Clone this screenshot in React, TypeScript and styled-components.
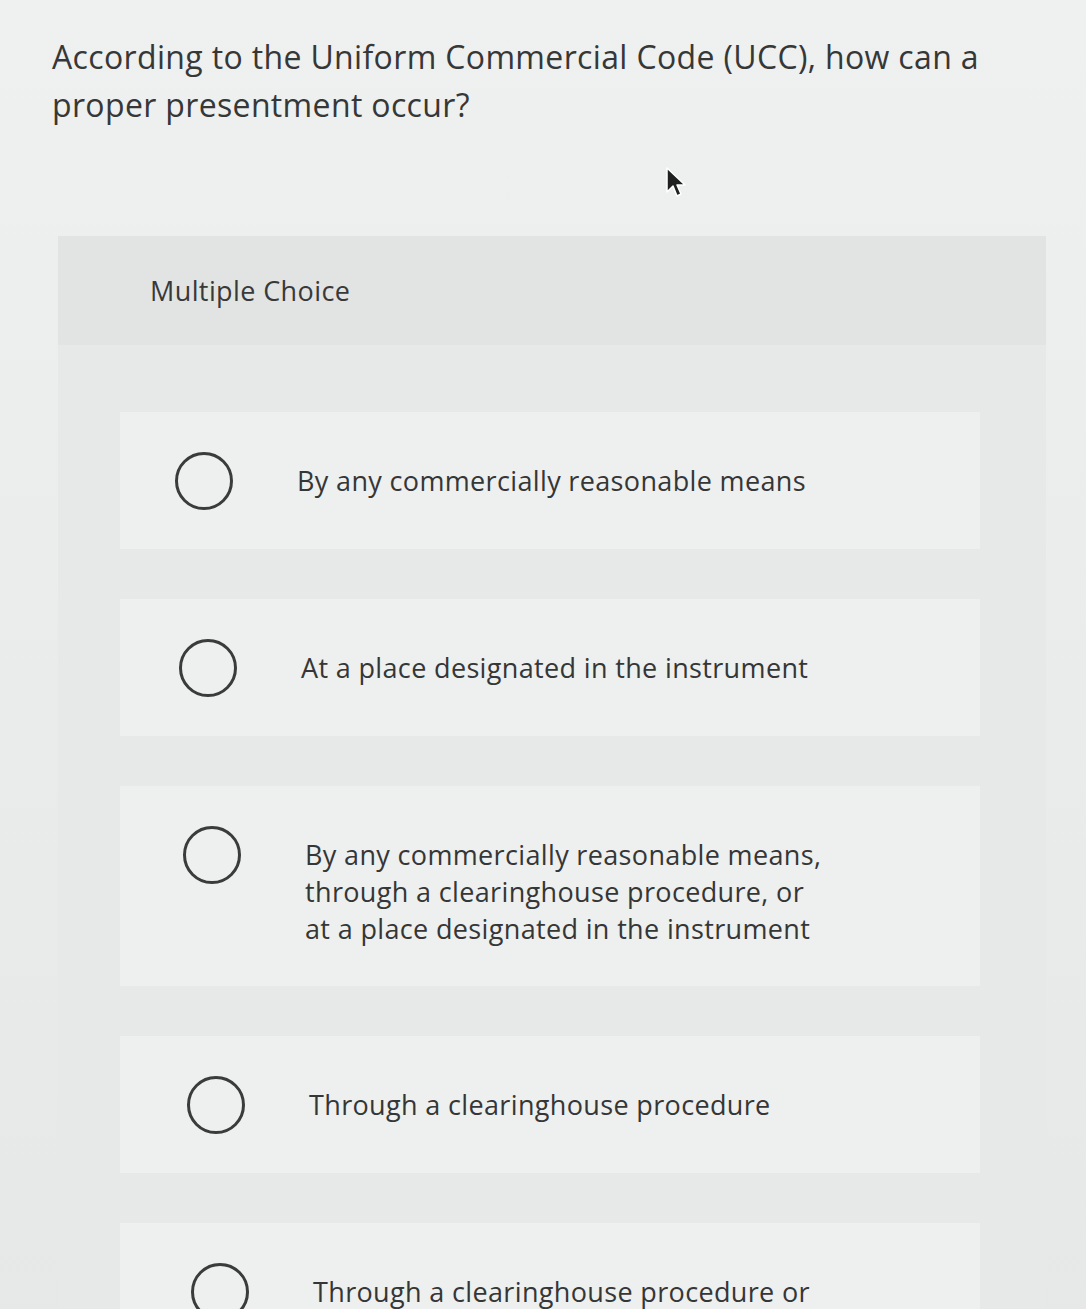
import styled, { createGlobalStyle } from "styled-components";

const GlobalStyle = createGlobalStyle`
  html, body {
    margin: 0;
    padding: 0;
    background: #eceded;
  }
  body {
    font-family: "Open Sans", Lato, "Liberation Sans", sans-serif;
    color: #353636;
  }
`;

const Page = styled.div`
  position: relative;
  min-height: 1309px;
  overflow: hidden;
  background: linear-gradient(180deg, #eff0f0 0%, #ebecec 40%, #e6e7e7 100%);
  padding: 33px 40px 0 52px;
  box-sizing: border-box;
`;

const Question = styled.h1`
  margin: 0;
  width: 970px;
  font-size: 32px;
  letter-spacing: 0.35px;
  line-height: 48px;
  font-weight: 400;
  color: #363737;
`;

const Cursor = styled.svg`
  position: absolute;
  left: 664px;
  top: 166px;
  width: 24px;
  height: 36px;
`;

const Panel = styled.section`
  margin: 107px 0 0 6px;
  width: 988px;
  background: #e7e8e8;
`;

const PanelHeader = styled.div`
  height: 109px;
  display: flex;
  align-items: center;
  padding-left: 92px;
  background: #e2e3e3;
  font-size: 27px;
  letter-spacing: 0.4px;
  color: #383939;
`;

const Options = styled.div`
  display: flex;
  flex-direction: column;
  gap: 50px;
  padding: 67px 66px 0 62px;
`;

const OptionCard = styled.label<{ $shift: number }>`
  display: flex;
  align-items: flex-start;
  gap: 64px;
  padding: 40px 0 39px ${(p) => 55 + p.$shift}px;
  background: #eeefef;
  cursor: pointer;
`;

const Radio = styled.span`
  flex: none;
  width: 52px;
  height: 52px;
  border: 3px solid #3a3b3b;
  border-radius: 50%;
`;

const OptionText = styled.span`
  white-space: pre-line;
  padding-top: 10px;
  font-size: 27px;
  letter-spacing: 0.35px;
  line-height: 37px;
  color: #353636;
`;

const options = [
  "By any commercially reasonable means",
  "At a place designated in the instrument",
  "By any commercially reasonable means,\nthrough a clearinghouse procedure, or\nat a place designated in the instrument",
  "Through a clearinghouse procedure",
  "Through a clearinghouse procedure or",
];

export default function App() {
  return (
    <Page>
      <GlobalStyle />
      <Question>
        According to the Uniform Commercial Code (UCC), how can a proper presentment occur?
      </Question>
      <Cursor viewBox="0 0 24 36">
        <path
          d="M3 2 L3 26 L9 20 L13 30 L17 28 L13 19 L21 19 Z"
          fill="#1f2020"
          stroke="#ffffff"
          strokeWidth="1.5"
          strokeLinejoin="round"
        />
      </Cursor>
      <Panel>
        <PanelHeader>Multiple Choice</PanelHeader>
        <Options>
          {options.map((text, i) => (
            <OptionCard key={i} $shift={i * 4}>
              <Radio />
              <OptionText>{text}</OptionText>
            </OptionCard>
          ))}
        </Options>
      </Panel>
    </Page>
  );
}
